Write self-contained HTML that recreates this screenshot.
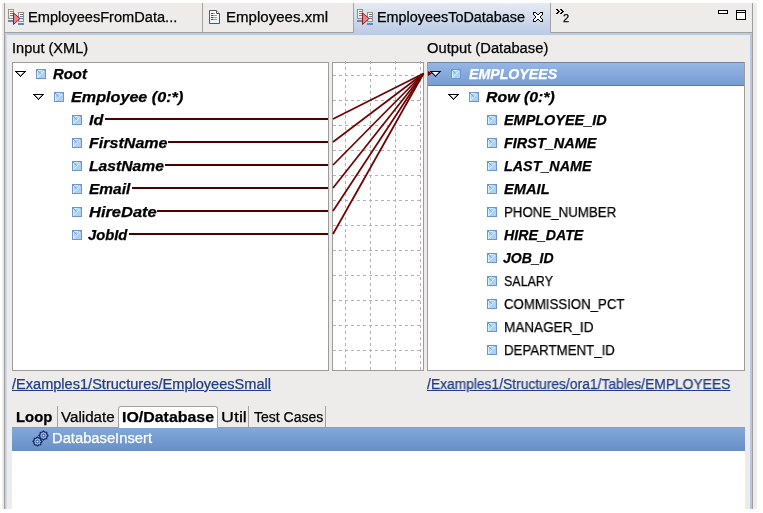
<!DOCTYPE html>
<html><head><meta charset="utf-8">
<style>
*{margin:0;padding:0;box-sizing:border-box}
html,body{width:763px;height:513px;overflow:hidden;background:#fff;font-family:"Liberation Sans",sans-serif;font-size:14px;color:#000}
.a{position:absolute}
.t{position:absolute;white-space:nowrap;line-height:20px;transform-origin:0 0;will-change:transform;-webkit-text-stroke:0.25px currentColor}
svg{position:absolute;left:0;top:0}
</style></head><body>
<div class="a" style="left:2px;top:3px;width:755px;height:506px;background:#edeceb"></div>
<div class="a" style="left:4px;top:3px;width:1px;height:506px;background:#9f9e9c"></div>
<div class="a" style="left:752px;top:3px;width:1px;height:506px;background:#9f9e9c"></div>
<div class="a" style="left:5px;top:32px;width:747px;height:1px;background:#a3a2a0"></div>
<div class="a" style="left:5px;top:33px;width:747px;height:2px;background:#b8cae4"></div>
<div class="a" style="left:5px;top:33px;width:2px;height:476px;background:linear-gradient(90deg,#b8c8e0,#d8e2f0)"></div>
<div class="a" style="left:750px;top:33px;width:2px;height:476px;background:#b8c8e2"></div>
<div class="a" style="left:202px;top:3px;width:1px;height:29px;background:#a3a2a0"></div>
<div class="a" style="left:353px;top:3px;width:198px;height:32px;background:linear-gradient(#e6ebf3,#b8cae4)"></div>
<div class="a" style="left:353px;top:3px;width:1px;height:30px;background:#a3a2a0"></div>
<div class="a" style="left:550px;top:3px;width:1px;height:30px;background:#a3a2a0"></div>

<div class="a" style="left:12px;top:62px;width:317px;height:309px;background:#fff;border:1px solid #9c9b99"></div>
<div class="a" style="left:332px;top:62px;width:92px;height:309px;background:#fff;border:1px solid #9c9b99"></div>
<div class="a" style="left:427px;top:62px;width:318px;height:309px;background:#fff;border:1px solid #9c9b99"></div>
<div class="a" style="left:428px;top:62px;width:316px;height:24px;background:linear-gradient(#95b6e6,#779dd1);border-top:1px solid #72849e;border-bottom:1px solid #5f789c"></div>

<!-- bottom -->
<div class="a" style="left:57px;top:406px;width:1px;height:21px;background:#a3a2a0"></div>
<div class="a" style="left:248px;top:406px;width:1px;height:21px;background:#a3a2a0"></div>
<div class="a" style="left:325px;top:406px;width:1px;height:21px;background:#a3a2a0"></div>
<div class="a" style="left:12px;top:427px;width:733px;height:24px;background:linear-gradient(#83a7d8,#6790c8);border-top:1px solid #8b9dba"></div>
<div class="a" style="left:118px;top:406px;width:100px;height:22px;background:#fff;border:1px solid #a3a2a0;border-bottom:none;border-radius:3px 3px 0 0"></div>
<div class="a" style="left:12px;top:451px;width:733px;height:58px;background:#fff"></div>

<svg width="763" height="513" viewBox="0 0 763 513">
<g stroke="#b2b2b2" stroke-width="1" stroke-dasharray="3 3" fill="none"><line x1="345.5" y1="61" x2="345.5" y2="370" /><line x1="370.5" y1="61" x2="370.5" y2="370" /><line x1="395.5" y1="61" x2="395.5" y2="370" /><line x1="420.5" y1="61" x2="420.5" y2="370" /><line x1="333" y1="75.5" x2="423" y2="75.5" /><line x1="333" y1="100.5" x2="423" y2="100.5" /><line x1="333" y1="125.5" x2="423" y2="125.5" /><line x1="333" y1="150.5" x2="423" y2="150.5" /><line x1="333" y1="175.5" x2="423" y2="175.5" /><line x1="333" y1="200.5" x2="423" y2="200.5" /><line x1="333" y1="225.5" x2="423" y2="225.5" /><line x1="333" y1="250.5" x2="423" y2="250.5" /><line x1="333" y1="275.5" x2="423" y2="275.5" /><line x1="333" y1="300.5" x2="423" y2="300.5" /><line x1="333" y1="325.5" x2="423" y2="325.5" /><line x1="333" y1="350.5" x2="423" y2="350.5" /></g>
<rect x="105" y="118" width="223" height="2" fill="#4e0000"/><line x1="333" y1="119" x2="423.5" y2="73.5" stroke="#6e0404" stroke-width="1.75"/><rect x="168" y="141" width="160" height="2" fill="#4e0000"/><line x1="333" y1="142" x2="423.5" y2="73.5" stroke="#6e0404" stroke-width="1.75"/><rect x="165" y="164" width="163" height="2" fill="#4e0000"/><line x1="333" y1="165" x2="423.5" y2="73.5" stroke="#6e0404" stroke-width="1.75"/><rect x="132" y="187" width="196" height="2" fill="#4e0000"/><line x1="333" y1="188" x2="423.5" y2="73.5" stroke="#6e0404" stroke-width="1.75"/><rect x="157" y="210" width="171" height="2" fill="#4e0000"/><line x1="333" y1="211" x2="423.5" y2="73.5" stroke="#6e0404" stroke-width="1.75"/><rect x="129" y="233" width="199" height="2" fill="#4e0000"/><line x1="333" y1="234" x2="423.5" y2="73.5" stroke="#6e0404" stroke-width="1.75"/>
<g fill="#8a8a8a"><rect x="17" y="72" width="1" height="1"/><rect x="23" y="72" width="1" height="1"/><rect x="18" y="73" width="1" height="1"/><rect x="22" y="73" width="1" height="1"/><rect x="19" y="74" width="1" height="1"/><rect x="21" y="74" width="1" height="1"/><rect x="20" y="75" width="1" height="1"/><rect x="20" y="75" width="1" height="1"/></g><g fill="#000"><rect x="15" y="71" width="11" height="1"/><rect x="16" y="72" width="1" height="1"/><rect x="24" y="72" width="1" height="1"/><rect x="17" y="73" width="1" height="1"/><rect x="23" y="73" width="1" height="1"/><rect x="18" y="74" width="1" height="1"/><rect x="22" y="74" width="1" height="1"/><rect x="19" y="75" width="1" height="1"/><rect x="21" y="75" width="1" height="1"/><rect x="20" y="76" width="1" height="1"/></g><rect x="36" y="69" width="10" height="10" fill="#7095c9"/><rect x="37" y="70" width="8" height="8" fill="#afcff6"/><rect x="37" y="71" width="1" height="7" fill="#c6f5ff"/><rect x="38" y="70" width="4" height="1" fill="#c6f5ff"/><rect x="37" y="77" width="1" height="1" fill="#d2fbff"/><rect x="38" y="76" width="1" height="1" fill="#d2fbff"/><rect x="39" y="75" width="1" height="1" fill="#d2fbff"/><rect x="40" y="74" width="1" height="1" fill="#d2fbff"/><rect x="41" y="73" width="1" height="1" fill="#d2fbff"/><rect x="42" y="72" width="1" height="1" fill="#d2fbff"/><rect x="43" y="71" width="1" height="1" fill="#d2fbff"/><rect x="44" y="70" width="1" height="1" fill="#d2fbff"/><rect x="38" y="71" width="1" height="1" fill="#7ea3d6"/><rect x="39" y="72" width="1" height="1" fill="#7ea3d6"/><rect x="40" y="73" width="1" height="1" fill="#86aadb"/><rect x="37" y="70" width="1" height="1" fill="#6f94c8"/><rect x="44" y="70" width="1" height="1" fill="#86aadb"/><g fill="#8a8a8a"><rect x="35" y="95" width="1" height="1"/><rect x="41" y="95" width="1" height="1"/><rect x="36" y="96" width="1" height="1"/><rect x="40" y="96" width="1" height="1"/><rect x="37" y="97" width="1" height="1"/><rect x="39" y="97" width="1" height="1"/><rect x="38" y="98" width="1" height="1"/><rect x="38" y="98" width="1" height="1"/></g><g fill="#000"><rect x="33" y="94" width="11" height="1"/><rect x="34" y="95" width="1" height="1"/><rect x="42" y="95" width="1" height="1"/><rect x="35" y="96" width="1" height="1"/><rect x="41" y="96" width="1" height="1"/><rect x="36" y="97" width="1" height="1"/><rect x="40" y="97" width="1" height="1"/><rect x="37" y="98" width="1" height="1"/><rect x="39" y="98" width="1" height="1"/><rect x="38" y="99" width="1" height="1"/></g><rect x="54" y="92" width="10" height="10" fill="#7095c9"/><rect x="55" y="93" width="8" height="8" fill="#afcff6"/><rect x="55" y="94" width="1" height="7" fill="#c6f5ff"/><rect x="56" y="93" width="4" height="1" fill="#c6f5ff"/><rect x="55" y="100" width="1" height="1" fill="#d2fbff"/><rect x="56" y="99" width="1" height="1" fill="#d2fbff"/><rect x="57" y="98" width="1" height="1" fill="#d2fbff"/><rect x="58" y="97" width="1" height="1" fill="#d2fbff"/><rect x="59" y="96" width="1" height="1" fill="#d2fbff"/><rect x="60" y="95" width="1" height="1" fill="#d2fbff"/><rect x="61" y="94" width="1" height="1" fill="#d2fbff"/><rect x="62" y="93" width="1" height="1" fill="#d2fbff"/><rect x="56" y="94" width="1" height="1" fill="#7ea3d6"/><rect x="57" y="95" width="1" height="1" fill="#7ea3d6"/><rect x="58" y="96" width="1" height="1" fill="#86aadb"/><rect x="55" y="93" width="1" height="1" fill="#6f94c8"/><rect x="62" y="93" width="1" height="1" fill="#86aadb"/><rect x="72" y="115" width="10" height="10" fill="#7095c9"/><rect x="73" y="116" width="8" height="8" fill="#afcff6"/><rect x="73" y="117" width="1" height="7" fill="#c6f5ff"/><rect x="74" y="116" width="4" height="1" fill="#c6f5ff"/><rect x="73" y="123" width="1" height="1" fill="#d2fbff"/><rect x="74" y="122" width="1" height="1" fill="#d2fbff"/><rect x="75" y="121" width="1" height="1" fill="#d2fbff"/><rect x="76" y="120" width="1" height="1" fill="#d2fbff"/><rect x="77" y="119" width="1" height="1" fill="#d2fbff"/><rect x="78" y="118" width="1" height="1" fill="#d2fbff"/><rect x="79" y="117" width="1" height="1" fill="#d2fbff"/><rect x="80" y="116" width="1" height="1" fill="#d2fbff"/><rect x="74" y="117" width="1" height="1" fill="#7ea3d6"/><rect x="75" y="118" width="1" height="1" fill="#7ea3d6"/><rect x="76" y="119" width="1" height="1" fill="#86aadb"/><rect x="73" y="116" width="1" height="1" fill="#6f94c8"/><rect x="80" y="116" width="1" height="1" fill="#86aadb"/><rect x="72" y="138" width="10" height="10" fill="#7095c9"/><rect x="73" y="139" width="8" height="8" fill="#afcff6"/><rect x="73" y="140" width="1" height="7" fill="#c6f5ff"/><rect x="74" y="139" width="4" height="1" fill="#c6f5ff"/><rect x="73" y="146" width="1" height="1" fill="#d2fbff"/><rect x="74" y="145" width="1" height="1" fill="#d2fbff"/><rect x="75" y="144" width="1" height="1" fill="#d2fbff"/><rect x="76" y="143" width="1" height="1" fill="#d2fbff"/><rect x="77" y="142" width="1" height="1" fill="#d2fbff"/><rect x="78" y="141" width="1" height="1" fill="#d2fbff"/><rect x="79" y="140" width="1" height="1" fill="#d2fbff"/><rect x="80" y="139" width="1" height="1" fill="#d2fbff"/><rect x="74" y="140" width="1" height="1" fill="#7ea3d6"/><rect x="75" y="141" width="1" height="1" fill="#7ea3d6"/><rect x="76" y="142" width="1" height="1" fill="#86aadb"/><rect x="73" y="139" width="1" height="1" fill="#6f94c8"/><rect x="80" y="139" width="1" height="1" fill="#86aadb"/><rect x="72" y="161" width="10" height="10" fill="#7095c9"/><rect x="73" y="162" width="8" height="8" fill="#afcff6"/><rect x="73" y="163" width="1" height="7" fill="#c6f5ff"/><rect x="74" y="162" width="4" height="1" fill="#c6f5ff"/><rect x="73" y="169" width="1" height="1" fill="#d2fbff"/><rect x="74" y="168" width="1" height="1" fill="#d2fbff"/><rect x="75" y="167" width="1" height="1" fill="#d2fbff"/><rect x="76" y="166" width="1" height="1" fill="#d2fbff"/><rect x="77" y="165" width="1" height="1" fill="#d2fbff"/><rect x="78" y="164" width="1" height="1" fill="#d2fbff"/><rect x="79" y="163" width="1" height="1" fill="#d2fbff"/><rect x="80" y="162" width="1" height="1" fill="#d2fbff"/><rect x="74" y="163" width="1" height="1" fill="#7ea3d6"/><rect x="75" y="164" width="1" height="1" fill="#7ea3d6"/><rect x="76" y="165" width="1" height="1" fill="#86aadb"/><rect x="73" y="162" width="1" height="1" fill="#6f94c8"/><rect x="80" y="162" width="1" height="1" fill="#86aadb"/><rect x="72" y="184" width="10" height="10" fill="#7095c9"/><rect x="73" y="185" width="8" height="8" fill="#afcff6"/><rect x="73" y="186" width="1" height="7" fill="#c6f5ff"/><rect x="74" y="185" width="4" height="1" fill="#c6f5ff"/><rect x="73" y="192" width="1" height="1" fill="#d2fbff"/><rect x="74" y="191" width="1" height="1" fill="#d2fbff"/><rect x="75" y="190" width="1" height="1" fill="#d2fbff"/><rect x="76" y="189" width="1" height="1" fill="#d2fbff"/><rect x="77" y="188" width="1" height="1" fill="#d2fbff"/><rect x="78" y="187" width="1" height="1" fill="#d2fbff"/><rect x="79" y="186" width="1" height="1" fill="#d2fbff"/><rect x="80" y="185" width="1" height="1" fill="#d2fbff"/><rect x="74" y="186" width="1" height="1" fill="#7ea3d6"/><rect x="75" y="187" width="1" height="1" fill="#7ea3d6"/><rect x="76" y="188" width="1" height="1" fill="#86aadb"/><rect x="73" y="185" width="1" height="1" fill="#6f94c8"/><rect x="80" y="185" width="1" height="1" fill="#86aadb"/><rect x="72" y="207" width="10" height="10" fill="#7095c9"/><rect x="73" y="208" width="8" height="8" fill="#afcff6"/><rect x="73" y="209" width="1" height="7" fill="#c6f5ff"/><rect x="74" y="208" width="4" height="1" fill="#c6f5ff"/><rect x="73" y="215" width="1" height="1" fill="#d2fbff"/><rect x="74" y="214" width="1" height="1" fill="#d2fbff"/><rect x="75" y="213" width="1" height="1" fill="#d2fbff"/><rect x="76" y="212" width="1" height="1" fill="#d2fbff"/><rect x="77" y="211" width="1" height="1" fill="#d2fbff"/><rect x="78" y="210" width="1" height="1" fill="#d2fbff"/><rect x="79" y="209" width="1" height="1" fill="#d2fbff"/><rect x="80" y="208" width="1" height="1" fill="#d2fbff"/><rect x="74" y="209" width="1" height="1" fill="#7ea3d6"/><rect x="75" y="210" width="1" height="1" fill="#7ea3d6"/><rect x="76" y="211" width="1" height="1" fill="#86aadb"/><rect x="73" y="208" width="1" height="1" fill="#6f94c8"/><rect x="80" y="208" width="1" height="1" fill="#86aadb"/><rect x="72" y="230" width="10" height="10" fill="#7095c9"/><rect x="73" y="231" width="8" height="8" fill="#afcff6"/><rect x="73" y="232" width="1" height="7" fill="#c6f5ff"/><rect x="74" y="231" width="4" height="1" fill="#c6f5ff"/><rect x="73" y="238" width="1" height="1" fill="#d2fbff"/><rect x="74" y="237" width="1" height="1" fill="#d2fbff"/><rect x="75" y="236" width="1" height="1" fill="#d2fbff"/><rect x="76" y="235" width="1" height="1" fill="#d2fbff"/><rect x="77" y="234" width="1" height="1" fill="#d2fbff"/><rect x="78" y="233" width="1" height="1" fill="#d2fbff"/><rect x="79" y="232" width="1" height="1" fill="#d2fbff"/><rect x="80" y="231" width="1" height="1" fill="#d2fbff"/><rect x="74" y="232" width="1" height="1" fill="#7ea3d6"/><rect x="75" y="233" width="1" height="1" fill="#7ea3d6"/><rect x="76" y="234" width="1" height="1" fill="#86aadb"/><rect x="73" y="231" width="1" height="1" fill="#6f94c8"/><rect x="80" y="231" width="1" height="1" fill="#86aadb"/><rect x="433" y="72" width="5" height="1" fill="#fff"/><rect x="434" y="73" width="3" height="1" fill="#fff"/><rect x="435" y="74" width="1" height="1" fill="#fff"/><g fill="#6e7c90"><rect x="432" y="72" width="1" height="1"/><rect x="438" y="72" width="1" height="1"/><rect x="433" y="73" width="1" height="1"/><rect x="437" y="73" width="1" height="1"/><rect x="434" y="74" width="1" height="1"/><rect x="436" y="74" width="1" height="1"/><rect x="435" y="75" width="1" height="1"/><rect x="435" y="75" width="1" height="1"/></g><g fill="#000"><rect x="430" y="71" width="11" height="1"/><rect x="431" y="72" width="1" height="1"/><rect x="439" y="72" width="1" height="1"/><rect x="432" y="73" width="1" height="1"/><rect x="438" y="73" width="1" height="1"/><rect x="433" y="74" width="1" height="1"/><rect x="437" y="74" width="1" height="1"/><rect x="434" y="75" width="1" height="1"/><rect x="436" y="75" width="1" height="1"/><rect x="435" y="76" width="1" height="1"/></g><rect x="451" y="69" width="10" height="10" fill="#7095c9"/><rect x="452" y="70" width="8" height="8" fill="#afcff6"/><rect x="452" y="71" width="1" height="7" fill="#c6f5ff"/><rect x="453" y="70" width="4" height="1" fill="#c6f5ff"/><rect x="452" y="77" width="1" height="1" fill="#d2fbff"/><rect x="453" y="76" width="1" height="1" fill="#d2fbff"/><rect x="454" y="75" width="1" height="1" fill="#d2fbff"/><rect x="455" y="74" width="1" height="1" fill="#d2fbff"/><rect x="456" y="73" width="1" height="1" fill="#d2fbff"/><rect x="457" y="72" width="1" height="1" fill="#d2fbff"/><rect x="458" y="71" width="1" height="1" fill="#d2fbff"/><rect x="459" y="70" width="1" height="1" fill="#d2fbff"/><rect x="453" y="71" width="1" height="1" fill="#7ea3d6"/><rect x="454" y="72" width="1" height="1" fill="#7ea3d6"/><rect x="455" y="73" width="1" height="1" fill="#86aadb"/><rect x="452" y="70" width="1" height="1" fill="#6f94c8"/><rect x="459" y="70" width="1" height="1" fill="#86aadb"/><g fill="#8a8a8a"><rect x="450" y="95" width="1" height="1"/><rect x="456" y="95" width="1" height="1"/><rect x="451" y="96" width="1" height="1"/><rect x="455" y="96" width="1" height="1"/><rect x="452" y="97" width="1" height="1"/><rect x="454" y="97" width="1" height="1"/><rect x="453" y="98" width="1" height="1"/><rect x="453" y="98" width="1" height="1"/></g><g fill="#000"><rect x="448" y="94" width="11" height="1"/><rect x="449" y="95" width="1" height="1"/><rect x="457" y="95" width="1" height="1"/><rect x="450" y="96" width="1" height="1"/><rect x="456" y="96" width="1" height="1"/><rect x="451" y="97" width="1" height="1"/><rect x="455" y="97" width="1" height="1"/><rect x="452" y="98" width="1" height="1"/><rect x="454" y="98" width="1" height="1"/><rect x="453" y="99" width="1" height="1"/></g><rect x="469" y="92" width="10" height="10" fill="#7095c9"/><rect x="470" y="93" width="8" height="8" fill="#afcff6"/><rect x="470" y="94" width="1" height="7" fill="#c6f5ff"/><rect x="471" y="93" width="4" height="1" fill="#c6f5ff"/><rect x="470" y="100" width="1" height="1" fill="#d2fbff"/><rect x="471" y="99" width="1" height="1" fill="#d2fbff"/><rect x="472" y="98" width="1" height="1" fill="#d2fbff"/><rect x="473" y="97" width="1" height="1" fill="#d2fbff"/><rect x="474" y="96" width="1" height="1" fill="#d2fbff"/><rect x="475" y="95" width="1" height="1" fill="#d2fbff"/><rect x="476" y="94" width="1" height="1" fill="#d2fbff"/><rect x="477" y="93" width="1" height="1" fill="#d2fbff"/><rect x="471" y="94" width="1" height="1" fill="#7ea3d6"/><rect x="472" y="95" width="1" height="1" fill="#7ea3d6"/><rect x="473" y="96" width="1" height="1" fill="#86aadb"/><rect x="470" y="93" width="1" height="1" fill="#6f94c8"/><rect x="477" y="93" width="1" height="1" fill="#86aadb"/><rect x="487" y="115" width="10" height="10" fill="#7095c9"/><rect x="488" y="116" width="8" height="8" fill="#afcff6"/><rect x="488" y="117" width="1" height="7" fill="#c6f5ff"/><rect x="489" y="116" width="4" height="1" fill="#c6f5ff"/><rect x="488" y="123" width="1" height="1" fill="#d2fbff"/><rect x="489" y="122" width="1" height="1" fill="#d2fbff"/><rect x="490" y="121" width="1" height="1" fill="#d2fbff"/><rect x="491" y="120" width="1" height="1" fill="#d2fbff"/><rect x="492" y="119" width="1" height="1" fill="#d2fbff"/><rect x="493" y="118" width="1" height="1" fill="#d2fbff"/><rect x="494" y="117" width="1" height="1" fill="#d2fbff"/><rect x="495" y="116" width="1" height="1" fill="#d2fbff"/><rect x="489" y="117" width="1" height="1" fill="#7ea3d6"/><rect x="490" y="118" width="1" height="1" fill="#7ea3d6"/><rect x="491" y="119" width="1" height="1" fill="#86aadb"/><rect x="488" y="116" width="1" height="1" fill="#6f94c8"/><rect x="495" y="116" width="1" height="1" fill="#86aadb"/><rect x="487" y="138" width="10" height="10" fill="#7095c9"/><rect x="488" y="139" width="8" height="8" fill="#afcff6"/><rect x="488" y="140" width="1" height="7" fill="#c6f5ff"/><rect x="489" y="139" width="4" height="1" fill="#c6f5ff"/><rect x="488" y="146" width="1" height="1" fill="#d2fbff"/><rect x="489" y="145" width="1" height="1" fill="#d2fbff"/><rect x="490" y="144" width="1" height="1" fill="#d2fbff"/><rect x="491" y="143" width="1" height="1" fill="#d2fbff"/><rect x="492" y="142" width="1" height="1" fill="#d2fbff"/><rect x="493" y="141" width="1" height="1" fill="#d2fbff"/><rect x="494" y="140" width="1" height="1" fill="#d2fbff"/><rect x="495" y="139" width="1" height="1" fill="#d2fbff"/><rect x="489" y="140" width="1" height="1" fill="#7ea3d6"/><rect x="490" y="141" width="1" height="1" fill="#7ea3d6"/><rect x="491" y="142" width="1" height="1" fill="#86aadb"/><rect x="488" y="139" width="1" height="1" fill="#6f94c8"/><rect x="495" y="139" width="1" height="1" fill="#86aadb"/><rect x="487" y="161" width="10" height="10" fill="#7095c9"/><rect x="488" y="162" width="8" height="8" fill="#afcff6"/><rect x="488" y="163" width="1" height="7" fill="#c6f5ff"/><rect x="489" y="162" width="4" height="1" fill="#c6f5ff"/><rect x="488" y="169" width="1" height="1" fill="#d2fbff"/><rect x="489" y="168" width="1" height="1" fill="#d2fbff"/><rect x="490" y="167" width="1" height="1" fill="#d2fbff"/><rect x="491" y="166" width="1" height="1" fill="#d2fbff"/><rect x="492" y="165" width="1" height="1" fill="#d2fbff"/><rect x="493" y="164" width="1" height="1" fill="#d2fbff"/><rect x="494" y="163" width="1" height="1" fill="#d2fbff"/><rect x="495" y="162" width="1" height="1" fill="#d2fbff"/><rect x="489" y="163" width="1" height="1" fill="#7ea3d6"/><rect x="490" y="164" width="1" height="1" fill="#7ea3d6"/><rect x="491" y="165" width="1" height="1" fill="#86aadb"/><rect x="488" y="162" width="1" height="1" fill="#6f94c8"/><rect x="495" y="162" width="1" height="1" fill="#86aadb"/><rect x="487" y="184" width="10" height="10" fill="#7095c9"/><rect x="488" y="185" width="8" height="8" fill="#afcff6"/><rect x="488" y="186" width="1" height="7" fill="#c6f5ff"/><rect x="489" y="185" width="4" height="1" fill="#c6f5ff"/><rect x="488" y="192" width="1" height="1" fill="#d2fbff"/><rect x="489" y="191" width="1" height="1" fill="#d2fbff"/><rect x="490" y="190" width="1" height="1" fill="#d2fbff"/><rect x="491" y="189" width="1" height="1" fill="#d2fbff"/><rect x="492" y="188" width="1" height="1" fill="#d2fbff"/><rect x="493" y="187" width="1" height="1" fill="#d2fbff"/><rect x="494" y="186" width="1" height="1" fill="#d2fbff"/><rect x="495" y="185" width="1" height="1" fill="#d2fbff"/><rect x="489" y="186" width="1" height="1" fill="#7ea3d6"/><rect x="490" y="187" width="1" height="1" fill="#7ea3d6"/><rect x="491" y="188" width="1" height="1" fill="#86aadb"/><rect x="488" y="185" width="1" height="1" fill="#6f94c8"/><rect x="495" y="185" width="1" height="1" fill="#86aadb"/><rect x="487" y="207" width="10" height="10" fill="#7095c9"/><rect x="488" y="208" width="8" height="8" fill="#afcff6"/><rect x="488" y="209" width="1" height="7" fill="#c6f5ff"/><rect x="489" y="208" width="4" height="1" fill="#c6f5ff"/><rect x="488" y="215" width="1" height="1" fill="#d2fbff"/><rect x="489" y="214" width="1" height="1" fill="#d2fbff"/><rect x="490" y="213" width="1" height="1" fill="#d2fbff"/><rect x="491" y="212" width="1" height="1" fill="#d2fbff"/><rect x="492" y="211" width="1" height="1" fill="#d2fbff"/><rect x="493" y="210" width="1" height="1" fill="#d2fbff"/><rect x="494" y="209" width="1" height="1" fill="#d2fbff"/><rect x="495" y="208" width="1" height="1" fill="#d2fbff"/><rect x="489" y="209" width="1" height="1" fill="#7ea3d6"/><rect x="490" y="210" width="1" height="1" fill="#7ea3d6"/><rect x="491" y="211" width="1" height="1" fill="#86aadb"/><rect x="488" y="208" width="1" height="1" fill="#6f94c8"/><rect x="495" y="208" width="1" height="1" fill="#86aadb"/><rect x="487" y="230" width="10" height="10" fill="#7095c9"/><rect x="488" y="231" width="8" height="8" fill="#afcff6"/><rect x="488" y="232" width="1" height="7" fill="#c6f5ff"/><rect x="489" y="231" width="4" height="1" fill="#c6f5ff"/><rect x="488" y="238" width="1" height="1" fill="#d2fbff"/><rect x="489" y="237" width="1" height="1" fill="#d2fbff"/><rect x="490" y="236" width="1" height="1" fill="#d2fbff"/><rect x="491" y="235" width="1" height="1" fill="#d2fbff"/><rect x="492" y="234" width="1" height="1" fill="#d2fbff"/><rect x="493" y="233" width="1" height="1" fill="#d2fbff"/><rect x="494" y="232" width="1" height="1" fill="#d2fbff"/><rect x="495" y="231" width="1" height="1" fill="#d2fbff"/><rect x="489" y="232" width="1" height="1" fill="#7ea3d6"/><rect x="490" y="233" width="1" height="1" fill="#7ea3d6"/><rect x="491" y="234" width="1" height="1" fill="#86aadb"/><rect x="488" y="231" width="1" height="1" fill="#6f94c8"/><rect x="495" y="231" width="1" height="1" fill="#86aadb"/><rect x="487" y="253" width="10" height="10" fill="#7095c9"/><rect x="488" y="254" width="8" height="8" fill="#afcff6"/><rect x="488" y="255" width="1" height="7" fill="#c6f5ff"/><rect x="489" y="254" width="4" height="1" fill="#c6f5ff"/><rect x="488" y="261" width="1" height="1" fill="#d2fbff"/><rect x="489" y="260" width="1" height="1" fill="#d2fbff"/><rect x="490" y="259" width="1" height="1" fill="#d2fbff"/><rect x="491" y="258" width="1" height="1" fill="#d2fbff"/><rect x="492" y="257" width="1" height="1" fill="#d2fbff"/><rect x="493" y="256" width="1" height="1" fill="#d2fbff"/><rect x="494" y="255" width="1" height="1" fill="#d2fbff"/><rect x="495" y="254" width="1" height="1" fill="#d2fbff"/><rect x="489" y="255" width="1" height="1" fill="#7ea3d6"/><rect x="490" y="256" width="1" height="1" fill="#7ea3d6"/><rect x="491" y="257" width="1" height="1" fill="#86aadb"/><rect x="488" y="254" width="1" height="1" fill="#6f94c8"/><rect x="495" y="254" width="1" height="1" fill="#86aadb"/><rect x="487" y="276" width="10" height="10" fill="#7095c9"/><rect x="488" y="277" width="8" height="8" fill="#afcff6"/><rect x="488" y="278" width="1" height="7" fill="#c6f5ff"/><rect x="489" y="277" width="4" height="1" fill="#c6f5ff"/><rect x="488" y="284" width="1" height="1" fill="#d2fbff"/><rect x="489" y="283" width="1" height="1" fill="#d2fbff"/><rect x="490" y="282" width="1" height="1" fill="#d2fbff"/><rect x="491" y="281" width="1" height="1" fill="#d2fbff"/><rect x="492" y="280" width="1" height="1" fill="#d2fbff"/><rect x="493" y="279" width="1" height="1" fill="#d2fbff"/><rect x="494" y="278" width="1" height="1" fill="#d2fbff"/><rect x="495" y="277" width="1" height="1" fill="#d2fbff"/><rect x="489" y="278" width="1" height="1" fill="#7ea3d6"/><rect x="490" y="279" width="1" height="1" fill="#7ea3d6"/><rect x="491" y="280" width="1" height="1" fill="#86aadb"/><rect x="488" y="277" width="1" height="1" fill="#6f94c8"/><rect x="495" y="277" width="1" height="1" fill="#86aadb"/><rect x="487" y="299" width="10" height="10" fill="#7095c9"/><rect x="488" y="300" width="8" height="8" fill="#afcff6"/><rect x="488" y="301" width="1" height="7" fill="#c6f5ff"/><rect x="489" y="300" width="4" height="1" fill="#c6f5ff"/><rect x="488" y="307" width="1" height="1" fill="#d2fbff"/><rect x="489" y="306" width="1" height="1" fill="#d2fbff"/><rect x="490" y="305" width="1" height="1" fill="#d2fbff"/><rect x="491" y="304" width="1" height="1" fill="#d2fbff"/><rect x="492" y="303" width="1" height="1" fill="#d2fbff"/><rect x="493" y="302" width="1" height="1" fill="#d2fbff"/><rect x="494" y="301" width="1" height="1" fill="#d2fbff"/><rect x="495" y="300" width="1" height="1" fill="#d2fbff"/><rect x="489" y="301" width="1" height="1" fill="#7ea3d6"/><rect x="490" y="302" width="1" height="1" fill="#7ea3d6"/><rect x="491" y="303" width="1" height="1" fill="#86aadb"/><rect x="488" y="300" width="1" height="1" fill="#6f94c8"/><rect x="495" y="300" width="1" height="1" fill="#86aadb"/><rect x="487" y="322" width="10" height="10" fill="#7095c9"/><rect x="488" y="323" width="8" height="8" fill="#afcff6"/><rect x="488" y="324" width="1" height="7" fill="#c6f5ff"/><rect x="489" y="323" width="4" height="1" fill="#c6f5ff"/><rect x="488" y="330" width="1" height="1" fill="#d2fbff"/><rect x="489" y="329" width="1" height="1" fill="#d2fbff"/><rect x="490" y="328" width="1" height="1" fill="#d2fbff"/><rect x="491" y="327" width="1" height="1" fill="#d2fbff"/><rect x="492" y="326" width="1" height="1" fill="#d2fbff"/><rect x="493" y="325" width="1" height="1" fill="#d2fbff"/><rect x="494" y="324" width="1" height="1" fill="#d2fbff"/><rect x="495" y="323" width="1" height="1" fill="#d2fbff"/><rect x="489" y="324" width="1" height="1" fill="#7ea3d6"/><rect x="490" y="325" width="1" height="1" fill="#7ea3d6"/><rect x="491" y="326" width="1" height="1" fill="#86aadb"/><rect x="488" y="323" width="1" height="1" fill="#6f94c8"/><rect x="495" y="323" width="1" height="1" fill="#86aadb"/><rect x="487" y="345" width="10" height="10" fill="#7095c9"/><rect x="488" y="346" width="8" height="8" fill="#afcff6"/><rect x="488" y="347" width="1" height="7" fill="#c6f5ff"/><rect x="489" y="346" width="4" height="1" fill="#c6f5ff"/><rect x="488" y="353" width="1" height="1" fill="#d2fbff"/><rect x="489" y="352" width="1" height="1" fill="#d2fbff"/><rect x="490" y="351" width="1" height="1" fill="#d2fbff"/><rect x="491" y="350" width="1" height="1" fill="#d2fbff"/><rect x="492" y="349" width="1" height="1" fill="#d2fbff"/><rect x="493" y="348" width="1" height="1" fill="#d2fbff"/><rect x="494" y="347" width="1" height="1" fill="#d2fbff"/><rect x="495" y="346" width="1" height="1" fill="#d2fbff"/><rect x="489" y="347" width="1" height="1" fill="#7ea3d6"/><rect x="490" y="348" width="1" height="1" fill="#7ea3d6"/><rect x="491" y="349" width="1" height="1" fill="#86aadb"/><rect x="488" y="346" width="1" height="1" fill="#6f94c8"/><rect x="495" y="346" width="1" height="1" fill="#86aadb"/>
<rect x="533" y="12" width="1" height="1" fill="#000"/><rect x="534" y="12" width="1" height="1" fill="#000"/><rect x="535" y="12" width="1" height="1" fill="#000"/><rect x="540" y="12" width="1" height="1" fill="#000"/><rect x="541" y="12" width="1" height="1" fill="#000"/><rect x="542" y="12" width="1" height="1" fill="#000"/><rect x="533" y="13" width="1" height="1" fill="#000"/><rect x="534" y="13" width="1" height="1" fill="#fff"/><rect x="535" y="13" width="1" height="1" fill="#fff"/><rect x="536" y="13" width="1" height="1" fill="#000"/><rect x="539" y="13" width="1" height="1" fill="#000"/><rect x="540" y="13" width="1" height="1" fill="#fff"/><rect x="541" y="13" width="1" height="1" fill="#fff"/><rect x="542" y="13" width="1" height="1" fill="#000"/><rect x="533" y="14" width="1" height="1" fill="#000"/><rect x="534" y="14" width="1" height="1" fill="#fff"/><rect x="535" y="14" width="1" height="1" fill="#fff"/><rect x="536" y="14" width="1" height="1" fill="#fff"/><rect x="537" y="14" width="1" height="1" fill="#000"/><rect x="538" y="14" width="1" height="1" fill="#000"/><rect x="539" y="14" width="1" height="1" fill="#fff"/><rect x="540" y="14" width="1" height="1" fill="#fff"/><rect x="541" y="14" width="1" height="1" fill="#fff"/><rect x="542" y="14" width="1" height="1" fill="#000"/><rect x="534" y="15" width="1" height="1" fill="#000"/><rect x="535" y="15" width="1" height="1" fill="#fff"/><rect x="536" y="15" width="1" height="1" fill="#fff"/><rect x="537" y="15" width="1" height="1" fill="#fff"/><rect x="538" y="15" width="1" height="1" fill="#fff"/><rect x="539" y="15" width="1" height="1" fill="#fff"/><rect x="540" y="15" width="1" height="1" fill="#fff"/><rect x="541" y="15" width="1" height="1" fill="#000"/><rect x="535" y="16" width="1" height="1" fill="#000"/><rect x="536" y="16" width="1" height="1" fill="#fff"/><rect x="537" y="16" width="1" height="1" fill="#fff"/><rect x="538" y="16" width="1" height="1" fill="#fff"/><rect x="539" y="16" width="1" height="1" fill="#fff"/><rect x="540" y="16" width="1" height="1" fill="#000"/><rect x="535" y="17" width="1" height="1" fill="#000"/><rect x="536" y="17" width="1" height="1" fill="#fff"/><rect x="537" y="17" width="1" height="1" fill="#fff"/><rect x="538" y="17" width="1" height="1" fill="#fff"/><rect x="539" y="17" width="1" height="1" fill="#fff"/><rect x="540" y="17" width="1" height="1" fill="#000"/><rect x="534" y="18" width="1" height="1" fill="#000"/><rect x="535" y="18" width="1" height="1" fill="#fff"/><rect x="536" y="18" width="1" height="1" fill="#fff"/><rect x="537" y="18" width="1" height="1" fill="#fff"/><rect x="538" y="18" width="1" height="1" fill="#fff"/><rect x="539" y="18" width="1" height="1" fill="#fff"/><rect x="540" y="18" width="1" height="1" fill="#fff"/><rect x="541" y="18" width="1" height="1" fill="#000"/><rect x="533" y="19" width="1" height="1" fill="#000"/><rect x="534" y="19" width="1" height="1" fill="#fff"/><rect x="535" y="19" width="1" height="1" fill="#fff"/><rect x="536" y="19" width="1" height="1" fill="#fff"/><rect x="537" y="19" width="1" height="1" fill="#000"/><rect x="538" y="19" width="1" height="1" fill="#000"/><rect x="539" y="19" width="1" height="1" fill="#fff"/><rect x="540" y="19" width="1" height="1" fill="#fff"/><rect x="541" y="19" width="1" height="1" fill="#fff"/><rect x="542" y="19" width="1" height="1" fill="#000"/><rect x="533" y="20" width="1" height="1" fill="#000"/><rect x="534" y="20" width="1" height="1" fill="#fff"/><rect x="535" y="20" width="1" height="1" fill="#fff"/><rect x="536" y="20" width="1" height="1" fill="#000"/><rect x="539" y="20" width="1" height="1" fill="#000"/><rect x="540" y="20" width="1" height="1" fill="#fff"/><rect x="541" y="20" width="1" height="1" fill="#fff"/><rect x="542" y="20" width="1" height="1" fill="#000"/><rect x="533" y="21" width="1" height="1" fill="#000"/><rect x="534" y="21" width="1" height="1" fill="#000"/><rect x="535" y="21" width="1" height="1" fill="#000"/><rect x="540" y="21" width="1" height="1" fill="#000"/><rect x="541" y="21" width="1" height="1" fill="#000"/><rect x="542" y="21" width="1" height="1" fill="#000"/><rect x="556" y="9" width="1" height="1" fill="#000"/><rect x="557" y="9" width="1" height="1" fill="#000"/><rect x="560" y="9" width="1" height="1" fill="#000"/><rect x="561" y="9" width="1" height="1" fill="#000"/><rect x="557" y="10" width="1" height="1" fill="#000"/><rect x="558" y="10" width="1" height="1" fill="#000"/><rect x="561" y="10" width="1" height="1" fill="#000"/><rect x="562" y="10" width="1" height="1" fill="#000"/><rect x="558" y="11" width="1" height="1" fill="#000"/><rect x="559" y="11" width="1" height="1" fill="#000"/><rect x="562" y="11" width="1" height="1" fill="#000"/><rect x="563" y="11" width="1" height="1" fill="#000"/><rect x="557" y="12" width="1" height="1" fill="#000"/><rect x="558" y="12" width="1" height="1" fill="#000"/><rect x="561" y="12" width="1" height="1" fill="#000"/><rect x="562" y="12" width="1" height="1" fill="#000"/><rect x="556" y="13" width="1" height="1" fill="#000"/><rect x="557" y="13" width="1" height="1" fill="#000"/><rect x="560" y="13" width="1" height="1" fill="#000"/><rect x="561" y="13" width="1" height="1" fill="#000"/><rect x="718.5" y="10.5" width="9" height="3" fill="#fff" stroke="#000" stroke-width="1"/><rect x="736.5" y="10.5" width="9" height="9" fill="#fff" stroke="#000" stroke-width="1"/><rect x="737" y="12" width="8" height="1" fill="#000"/><rect x="8.5" y="9.5" width="5" height="9" fill="#fffdf4" stroke="#a28f7a" stroke-width="1"/><rect x="9" y="15" width="4" height="3" fill="#dcecf8"/><rect x="10" y="11" width="3" height="1" fill="#7b7b88"/><rect x="10" y="13" width="3" height="1" fill="#7b7b88"/><rect x="10" y="15" width="3" height="1" fill="#7b7b88"/><rect x="8" y="20" width="6" height="2" fill="#6189bb"/><rect x="18.5" y="12.5" width="5" height="9" fill="#fffdf4" stroke="#a28f7a" stroke-width="1"/><rect x="19" y="18" width="4" height="3" fill="#dcf4fb"/><rect x="20" y="14" width="3" height="1" fill="#5f7aa6"/><rect x="20" y="16" width="3" height="1" fill="#5f7aa6"/><rect x="20" y="18" width="3" height="1" fill="#5f7aa6"/><rect x="18" y="23" width="6" height="2" fill="#6189bb"/><path d="M13.5 13 L20 18.5 L13.5 24.5 Z" fill="#f0808a" stroke="#8a1c22" stroke-width="1"/><rect x="357.5" y="9.5" width="5" height="9" fill="#fffdf4" stroke="#a28f7a" stroke-width="1"/><rect x="358" y="15" width="4" height="3" fill="#dcecf8"/><rect x="359" y="11" width="3" height="1" fill="#7b7b88"/><rect x="359" y="13" width="3" height="1" fill="#7b7b88"/><rect x="359" y="15" width="3" height="1" fill="#7b7b88"/><rect x="357" y="20" width="6" height="2" fill="#6189bb"/><rect x="367.5" y="12.5" width="5" height="9" fill="#fffdf4" stroke="#a28f7a" stroke-width="1"/><rect x="368" y="18" width="4" height="3" fill="#dcf4fb"/><rect x="369" y="14" width="3" height="1" fill="#5f7aa6"/><rect x="369" y="16" width="3" height="1" fill="#5f7aa6"/><rect x="369" y="18" width="3" height="1" fill="#5f7aa6"/><rect x="367" y="23" width="6" height="2" fill="#6189bb"/><path d="M362.5 13 L369 18.5 L362.5 24.5 Z" fill="#f0808a" stroke="#8a1c22" stroke-width="1"/><path d="M209.5 10.5 H216.5 L219.5 13.5 V23.5 H209.5 Z" fill="#fff" stroke="#555" stroke-width="1" stroke-linejoin="miter"/><path d="M216.5 10.5 V13.5 H219.5" fill="#fff" stroke="#555" stroke-width="1"/><rect x="210" y="18" width="9" height="5" fill="#e6f6fb"/><rect x="211" y="13" width="4" height="1" fill="#86a6c8"/><rect x="211" y="13" width="2" height="1" fill="#2e4b7c"/><rect x="211" y="15" width="6" height="1" fill="#86a6c8"/><rect x="211" y="15" width="2" height="1" fill="#2e4b7c"/><rect x="211" y="17" width="6" height="1" fill="#86a6c8"/><rect x="211" y="17" width="2" height="1" fill="#2e4b7c"/><rect x="211" y="19" width="6" height="1" fill="#86a6c8"/><rect x="211" y="19" width="2" height="1" fill="#2e4b7c"/><polygon points="42.00,441.50 40.83,442.88 40.68,444.68 38.88,444.83 37.50,446.00 36.12,444.83 34.32,444.68 34.17,442.88 33.00,441.50 34.17,440.12 34.32,438.32 36.12,438.17 37.50,437.00 38.88,438.17 40.68,438.32 40.83,440.12" fill="#8fb3e0" stroke="#142868" stroke-width="1.3"/><circle cx="37.5" cy="441.5" r="1.3" fill="#fff" stroke="#1c3270" stroke-width="0.9"/><polygon points="48.00,435.50 46.83,436.88 46.68,438.68 44.88,438.83 43.50,440.00 42.12,438.83 40.32,438.68 40.17,436.88 39.00,435.50 40.17,434.12 40.32,432.32 42.12,432.17 43.50,431.00 44.88,432.17 46.68,432.32 46.83,434.12" fill="#8fb3e0" stroke="#142868" stroke-width="1.3"/><circle cx="43.5" cy="435.5" r="1.3" fill="#fff" stroke="#1c3270" stroke-width="0.9"/><path d="M428 71 L432 73.5 L428 76 Z" fill="#6a0000"/>
</svg>
<div class="t" style="left:27.96px;top:7px;transform:scaleX(1.0426);color:#000;">EmployeesFromData...</div>
<div class="t" style="left:225.92px;top:7px;transform:scaleX(1.0753);color:#000;">Employees.xml</div>
<div class="t" style="left:376.97px;top:7px;transform:scaleX(1.0280);color:#000;">EmployeesToDatabase</div>
<div class="t" style="left:11.96px;top:38px;transform:scaleX(1.0423);color:#000;">Input (XML)</div>
<div class="t" style="left:426.95px;top:38px;transform:scaleX(1.0531);color:#000;">Output (Database)</div>
<div class="t" style="left:53.00px;top:64px;transform:scaleX(1.0625);font-weight:bold;font-style:italic;color:#000;">Root</div>
<div class="t" style="left:71.00px;top:87px;transform:scaleX(1.1546);font-weight:bold;font-style:italic;color:#000;">Employee (0:*)</div>
<div class="t" style="left:89.00px;top:110px;transform:scaleX(1.1538);font-weight:bold;font-style:italic;color:#000;">Id</div>
<div class="t" style="left:89.00px;top:133px;transform:scaleX(1.1471);font-weight:bold;font-style:italic;color:#000;">FirstName</div>
<div class="t" style="left:89.00px;top:156px;transform:scaleX(1.1194);font-weight:bold;font-style:italic;color:#000;">LastName</div>
<div class="t" style="left:89.00px;top:179px;transform:scaleX(1.1053);font-weight:bold;font-style:italic;color:#000;">Email</div>
<div class="t" style="left:89.00px;top:202px;transform:scaleX(1.1754);font-weight:bold;font-style:italic;color:#000;">HireDate</div>
<div class="t" style="left:88.00px;top:225px;transform:scaleX(1.0526);font-weight:bold;font-style:italic;color:#000;">JobId</div>
<div class="t" style="left:469.00px;top:64px;transform:scaleX(1.0115);font-weight:bold;font-style:italic;color:#fff;">EMPLOYEES</div>
<div class="t" style="left:486.00px;top:87px;transform:scaleX(1.1333);font-weight:bold;font-style:italic;color:#000;">Row (0:*)</div>
<div class="t" style="left:504.00px;top:110px;transform:scaleX(1.0303);font-weight:bold;font-style:italic;color:#000;">EMPLOYEE_ID</div>
<div class="t" style="left:504.00px;top:133px;transform:scaleX(1.0333);font-weight:bold;font-style:italic;color:#000;">FIRST_NAME</div>
<div class="t" style="left:504.00px;top:156px;transform:scaleX(1.0233);font-weight:bold;font-style:italic;color:#000;">LAST_NAME</div>
<div class="t" style="left:504.00px;top:179px;transform:scaleX(1.0465);font-weight:bold;font-style:italic;color:#000;">EMAIL</div>
<div class="t" style="left:504.05px;top:202px;transform:scaleX(0.9487);color:#000;">PHONE_NUMBER</div>
<div class="t" style="left:504.00px;top:225px;transform:scaleX(1.0127);font-weight:bold;font-style:italic;color:#000;">HIRE_DATE</div>
<div class="t" style="left:503.00px;top:248px;transform:scaleX(1.0000);font-weight:bold;font-style:italic;color:#000;">JOB_ID</div>
<div class="t" style="left:504.11px;top:271px;transform:scaleX(0.8889);color:#000;">SALARY</div>
<div class="t" style="left:504.06px;top:294px;transform:scaleX(0.9444);color:#000;">COMMISSION_PCT</div>
<div class="t" style="left:504.03px;top:317px;transform:scaleX(0.9670);color:#000;">MANAGER_ID</div>
<div class="t" style="left:504.05px;top:340px;transform:scaleX(0.9478);color:#000;">DEPARTMENT_ID</div>
<div class="t" style="left:12.00px;top:374px;transform:scaleX(1.0403);color:#213d88;text-decoration:underline;">/Examples1/Structures/EmployeesSmall</div>
<div class="t" style="left:427.00px;top:374px;transform:scaleX(0.9870);color:#213d88;text-decoration:underline;">/Examples1/Structures/ora1/Tables/EMPLOYEES</div>
<div class="t" style="left:15.94px;top:407px;transform:scaleX(1.0606);font-weight:bold;color:#000;">Loop</div>
<div class="t" style="left:61.00px;top:407px;transform:scaleX(1.0816);color:#000;">Validate</div>
<div class="t" style="left:121.86px;top:407px;transform:scaleX(1.1375);font-weight:bold;color:#000;">IO/Database</div>
<div class="t" style="left:220.72px;top:407px;transform:scaleX(1.2778);color:#000;">Util</div>
<div class="t" style="left:254.00px;top:407px;transform:scaleX(1.0000);color:#000;">Test Cases</div>
<div class="t" style="left:51.95px;top:428px;transform:scaleX(1.0532);color:#fff;">DatabaseInsert</div>
<div class="t" style="left:563.00px;top:8px;transform:scaleX(1.0000);font-size:11px;color:#000;">2</div>
</body></html>
